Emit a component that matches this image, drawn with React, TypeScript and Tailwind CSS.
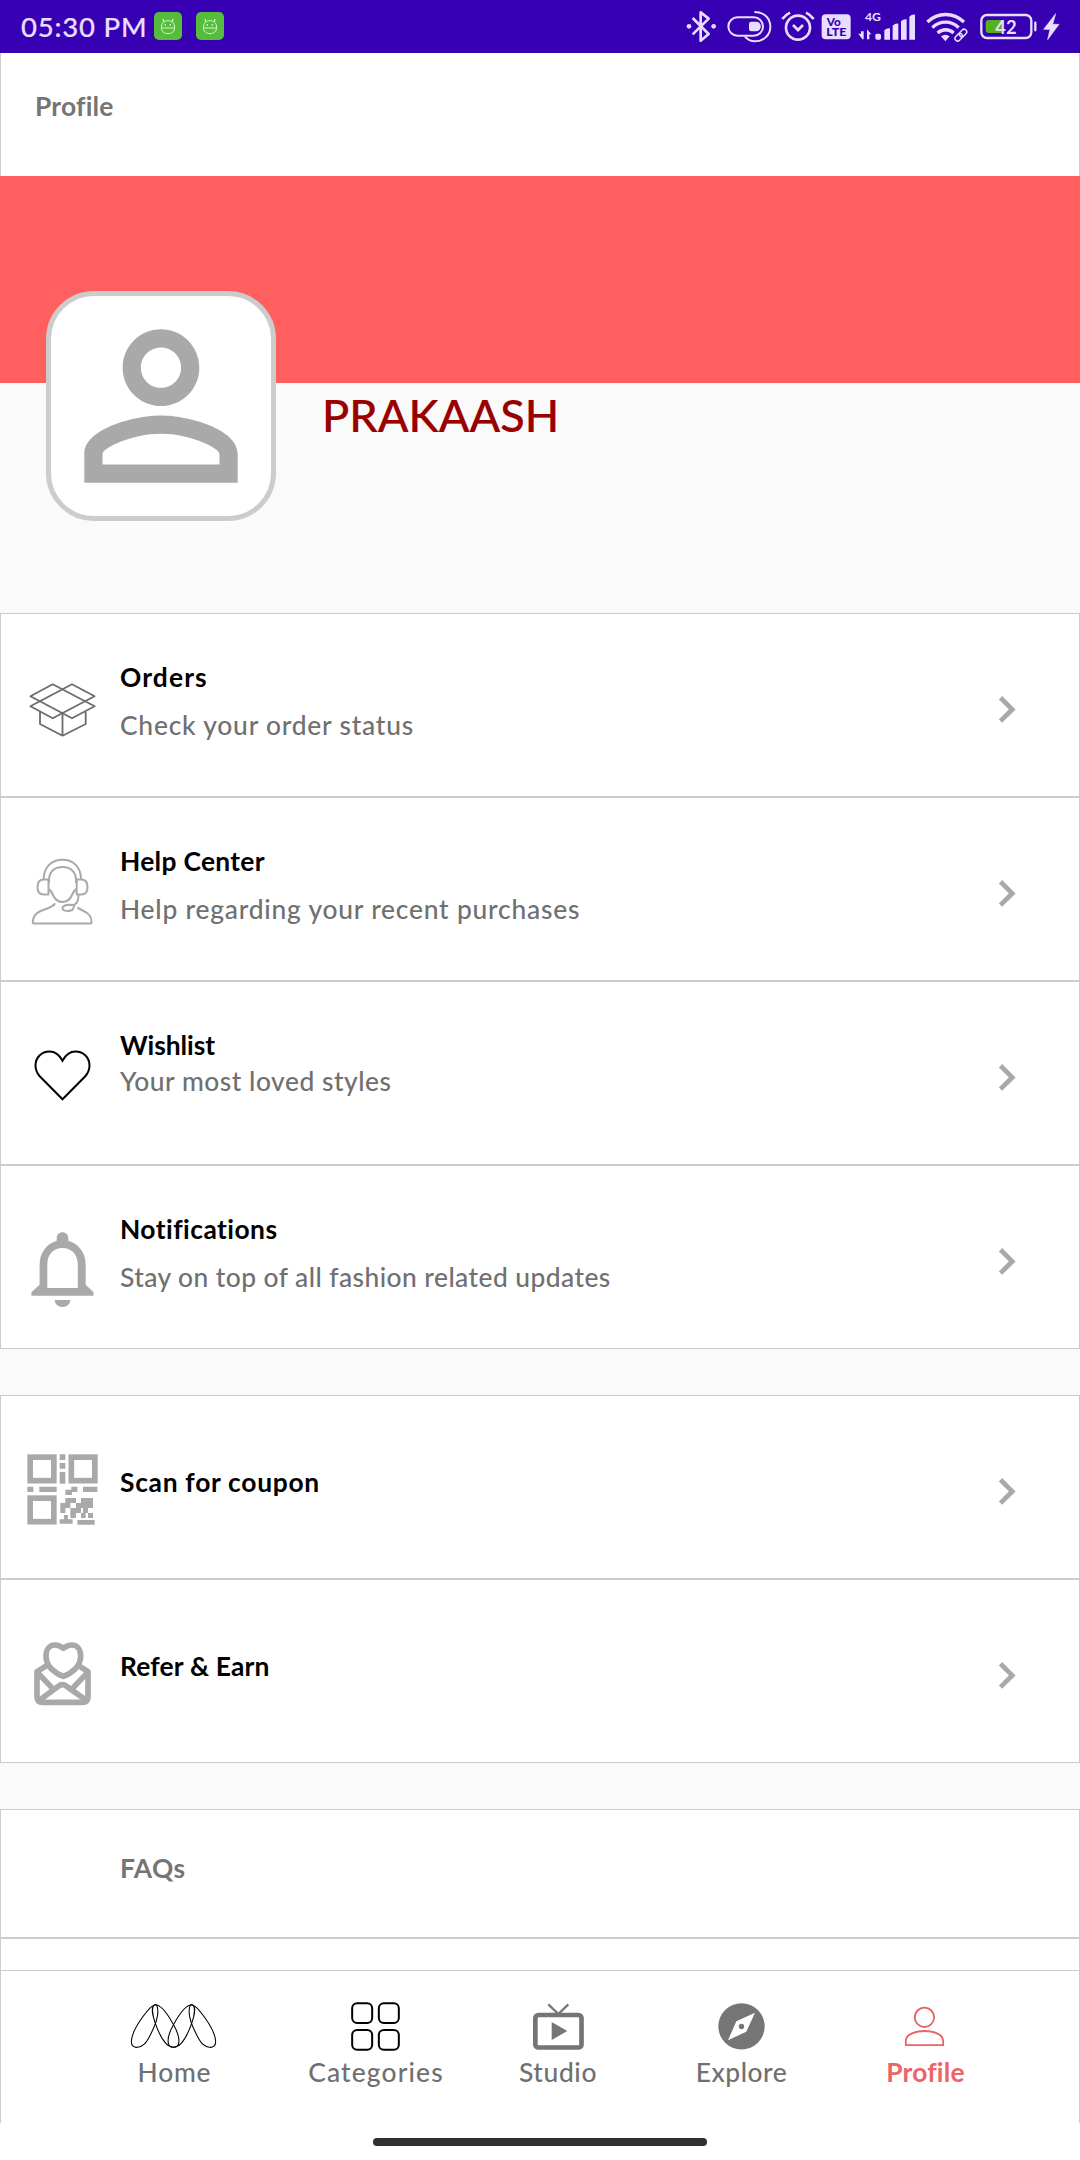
import React, { type ReactNode } from "react";

type IconProps = { x: number; y: number; w: number; h: number; children: ReactNode; className?: string };

function Icon({ x, y, w, h, children, className = "" }: IconProps) {
  return (
    <svg width={w} height={h} viewBox={`${x} ${y} ${w} ${h}`} fill="none" className={`shrink-0 ${className}`}>
      {children}
    </svg>
  );
}

/* ---------- status bar ---------- */

function NotificationBadge() {
  return (
    <svg width="28" height="28" viewBox="462 36 84 84" fill="none">
      <rect x="462" y="36" width="84" height="84" rx="15" fill="#55bd3b" />
      <g stroke="#d9f5cf" strokeWidth="3">
        <path d="M491 65l-2-8M517 65l2-8" strokeWidth="4" />
        <path d="M484 83c0-13 8-21 20-21s20 8 20 21c0 11-9 18-20 18s-20-7-20-18z" />
        <path d="M484 84h40" />
        <path d="M496 72v5M511 72v5" strokeWidth="4" />
      </g>
    </svg>
  );
}

function StatusIcon({ from, to, children }: { from: number; to: number; children: ReactNode }) {
  return (
    <svg
      width={(to - from) / 3}
      height="53"
      viewBox={`${from} 0 ${to - from} 159`}
      fill="none"
      stroke="#e9ddff"
      className="shrink-0"
    >
      {children}
    </svg>
  );
}

function StatusBar() {
  return (
    <header className="flex h-[53px] items-start justify-between bg-[#3700b3]">
      <div className="flex pl-[21px]">
        <span className="w-[133px] text-[27.5px] leading-[53px] font-medium tracking-[0.81px] whitespace-nowrap text-[#e9ddff] [-webkit-text-stroke:0.2px]">
          05:30 PM
        </span>
        <div className="flex gap-[14px] pt-3">
          <NotificationBadge />
          <NotificationBadge />
        </div>
      </div>
      <div className="flex">
        <StatusIcon from={0} to={155}>
          <path d="M68 54l48 48-24 20V37l24 19-48 47" strokeWidth="8" strokeLinejoin="round" />
          <circle cx="57" cy="79" r="7" fill="#e9ddff" stroke="none" />
          <circle cx="131" cy="79" r="7" fill="#e9ddff" stroke="none" />
        </StatusIcon>
        <StatusIcon from={155} to={315}>
          <rect x="174" y="52" width="104" height="55" rx="27.5" strokeWidth="6" />
          <path d="M243 65h14a14 14 0 0 1 0 29h-14q-7 0-7-7V72q0-7 7-7z" fill="#e9ddff" stroke="none" />
          <path d="M252 36c30 0 48 19 48 44s-20 44-46 44c-13 0-23-5-30-14" strokeWidth="6" />
        </StatusIcon>
        <StatusIcon from={315} to={445}>
          <circle cx="384" cy="83" r="36" strokeWidth="8" />
          <path d="M337 57q9-12 23-19M431 57q-9-12-23-19" strokeWidth="8" />
          <path d="M369 75l15 15 15-15" strokeWidth="8" />
        </StatusIcon>
        <StatusIcon from={445} to={555}>
          <rect x="456" y="43" width="87" height="75" rx="12" fill="#e9ddff" stroke="none" />
          <g fill="#3700b3" stroke="none" fontFamily="Lato" fontWeight="900">
            <text x="471" y="77" fontSize="34" textLength="42" lengthAdjust="spacingAndGlyphs">Vo</text>
            <text x="470" y="108" fontSize="34" textLength="60" lengthAdjust="spacingAndGlyphs">LTE</text>
          </g>
        </StatusIcon>
        <StatusIcon from={555} to={750}>
          <text x="585" y="63" fontSize="34" textLength="48" lengthAdjust="spacingAndGlyphs" fontFamily="Lato" fontWeight="700" fill="#e9ddff" stroke="none">
            4G
          </text>
          <g fill="#e9ddff" stroke="none">
            <path d="M577 118l-12-17h8V94h8v24zM591 118V88l13 15h-6v15z" />
            <rect x="616" y="101" width="17" height="18" rx="5" />
            <path d="M643 119V91q8-8 17-6v34zM668 119V77q8-8 17-6v48zM693 119V64q8-8 17-6v61zM718 119V50q8-8 17-6v75z" />
          </g>
        </StatusIcon>
        <StatusIcon from={750} to={910}>
          <g strokeWidth="10">
            <path d="M772 66c32-30 78-30 110 0" />
            <path d="M787 83c23-22 56-22 79 0" />
            <path d="M803 99c14-13 34-13 48 0" />
          </g>
          <path d="M813 109q13-9 26 0l-13 15z" fill="#e9ddff" stroke="none" />
          <g transform="rotate(-45 873 105)" strokeWidth="4.5">
            <rect x="851" y="97" width="25" height="16" rx="8" />
            <rect x="869" y="97" width="25" height="16" rx="8" />
          </g>
        </StatusIcon>
        <StatusIcon from={910} to={1110}>
          <rect x="935" y="45" width="150" height="69" rx="17" strokeWidth="7" />
          <path d="M957 60h42v39h-42q-9 0-9-9V69q0-9 9-9z" fill="#55b01f" stroke="none" />
          <path d="M1097 68v23" strokeWidth="7" strokeLinecap="round" />
          <text x="977" y="101" fontSize="54" textLength="64" lengthAdjust="spacingAndGlyphs" fontFamily="Lato" fontWeight="700" fill="#e9ddff" stroke="none">
            42
          </text>
        </StatusIcon>
        <StatusIcon from={1110} to={1230}>
          <path d="M1157 41l-36 47h19l-7 31 34-46h-19z" fill="#e9ddff" strokeWidth="2" />
        </StatusIcon>
      </div>
    </header>
  );
}

/* ---------- row icons ---------- */

const ROW_ICON = { x: 22, w: 80, h: 100 };

const OrdersIcon = () => (
  <Icon {...ROW_ICON} y={660}>
    <g stroke="#6c6c6c" strokeWidth="1.8" strokeLinejoin="round">
      <path d="M30.4 696.3L52.7 684.3 94.6 706.3 72 718.3 30.4 696.3z" />
      <path d="M94.6 696.3L72 684.3 30.4 706.3 52.7 718.3 94.6 696.3z" />
      <path d="M40 711.7V724l22.5 11.7L85.7 724v-12.3M62.5 713v22" />
    </g>
  </Icon>
);

const HelpIcon = () => (
  <Icon {...ROW_ICON} y={844}>
    <g stroke="#aaaaaa" strokeWidth="2" strokeLinecap="round" strokeLinejoin="round">
      <path d="M43.7 879c0-12 8-19.3 18.8-19.3S81 867 81 879" />
      <path d="M49 882v-2c0-8 5.500-13 13.500-13s13.500 5 13.500 13v2" />
      <path d="M49 889.500c2 1 2.500 2 4 5.500 2 4.500 5.500 7 9.500 7s7.500-2.500 9.500-7c1.500-3.500 2-4.500 4-5.500" />
      <path d="M48.500 879.500h-5c-4 0-6 3-6 7.500s2 7.500 6 7.500h5zM76.700 879.500h4.800c4 0 6 3 6 7.500s-2 7.500-6 7.500h-4.800z" />
      <path d="M78.500 895c0 5-1 8-4 9.700M74.500 905l-2 5c-3 1.200-9 1.400-10-.8-.5-2.500 2-4.200 6-4.500z" />
      <path d="M54.700 904c-3 3.500-8 4.500-13 6.500-6 2.500-9 6-9 12 0 .8.400 1.100 1 1.100h57c.6 0 .9-.3.900-1.100 0-7-3.500-9.500-8-11.500l-5.500-3" />
    </g>
  </Icon>
);

const HeartIcon = () => (
  <Icon {...ROW_ICON} y={1028}>
    <path
      d="M62.500 1060.700C60 1056 56 1051.500 49.500 1051.500c-8 0-14 6-14 14 0 4 1.500 7.500 4 10.500l23 23.300 23-23.300c2.500-3 4-6.500 4-10.500 0-8-6-14-14-14-6.500 0-10.500 4.500-13 9.200z"
      stroke="#000"
      strokeWidth="2"
    />
  </Icon>
);

const BellIcon = () => (
  <Icon {...ROW_ICON} y={1212}>
    <path
      fill="#a9a9a9"
      fillRule="evenodd"
      d="M56.700 1240.700v-2.500c0-3.400 2.500-6 5.800-6s5.800 2.600 5.800 6v2.500c10.500 3 17.400 12 17.400 24v20l7.800 7.500v3.500H31.400v-3.500l8.200-7.500v-20c0-12 6.900-21 17.100-24zM47.300 1288h30.500v-23.300c0-10-6-16.700-15.300-16.700s-15.200 6.700-15.200 16.700z"
    />
    <path fill="#a9a9a9" d="M54.700 1300h15.600c0 4-3.500 7-7.800 7s-7.800-3-7.800-7z" />
  </Icon>
);

const QrIcon = () => (
  <Icon {...ROW_ICON} y={1442}>
    <g transform="translate(0 1380) scale(0.33333)">
      <g stroke="#a9a9a9" strokeWidth="17">
        <rect x="90.500" y="231.500" width="71" height="70.500" />
        <rect x="214" y="231.500" width="70.500" height="70.500" />
        <rect x="90.500" y="354.500" width="71" height="70.500" />
      </g>
      <path
        fill="#a9a9a9"
        d="M179 223h17v17h-17zM179 249h17v17h-17zM179 276h17v35h-17zM82 320h18v16h-18zM118 320h52v16h-52zM249 320h43v16h-43zM214 320h18v16h-16v9h-20v-16h18zM196 354h32v15h-17v15h-15v15h-15v-30h15zM243 354h36v30h-15v15h-15v-15h-6v15h-15v15h-17v-30h17v-15h15zM243 399h14v15h-14zM264 399h15v15h-15zM192 405h12v13h14v13h-39v-13h13zM232 420h52v14h-52z"
      />
    </g>
  </Icon>
);

const ReferIcon = () => (
  <Icon {...ROW_ICON} y={1626}>
    <g transform="translate(0 1380) scale(0.33333)" stroke="#a9a9a9" strokeWidth="17" strokeLinejoin="round">
      <path d="M190 805c-12-10-20-10-26-10-16 0-26 14-26 33 0 32 27 52 52 61 25-9 52-29 52-61 0-19-10-33-26-33-6 0-14 0-26 10z" />
      <path d="M140 857l-29 18v75q0 17 17 17h119q17 0 17-17v-75l-28-18" />
      <path d="M113 878l45 48M262 878l-45 48M115 963l60-44q12-10 25 0l62 44" />
    </g>
  </Icon>
);

/* ---------- list rows ---------- */

type RowProps = {
  icon: ReactNode;
  title: string;
  titleTracking: string;
  sub?: string;
  subTracking?: string;
  tight?: boolean;
};

function Row({ icon, title, titleTracking, sub, subTracking = "", tight }: RowProps) {
  return (
    <div className="flex h-[184px] items-start border border-[#cccccc] bg-white pl-[21px]">
      <div className="mt-[46px] w-[98px]">{icon}</div>
      <div className={`flex-1 whitespace-nowrap text-[26.4px] ${sub ? "pt-[39px]" : "pt-[62px]"}`}>
        <div className={`leading-[48px] font-bold text-black ${titleTracking}`}>{title}</div>
        {sub && (
          <div
            className={`font-medium text-[#707070] ${tight ? "leading-[25px]" : "leading-[49px]"} ${subTracking}`}
          >
            {sub}
          </div>
        )}
      </div>
      <svg width="20" height="30" viewBox="997 694 20 30" fill="none" className="mt-[80px] mr-[62px]">
        <path d="M1000.500 697.700l11.700 11.700-11.700 11.700" stroke="#a9a9a9" strokeWidth="4.800" />
      </svg>
    </div>
  );
}

/* ---------- bottom navigation ---------- */

function NavItem({ icon, label, width, text }: { icon: ReactNode; label: string; width: string; text: string }) {
  return (
    <div className={`flex flex-col items-center pt-[25px] ${width}`}>
      {icon}
      <span className={`pl-px text-[26.4px] leading-[41px] whitespace-nowrap ${text}`}>{label}</span>
    </div>
  );
}

const Petals = () => (
  <>
    <path d="M167 134C150 134 94 210 94 245c0 25 33 23 51-9 20-36 31-70 28-89-1-9-3-13-6-13z" />
    <path d="M165 134c-11 4-9 28 1 56 14 40 34 72 55 72 19 0 23-26 0-67-18-34-40-61-56-61z" />
  </>
);

function BottomNav() {
  return (
    <nav className="flex h-[153px] border border-b-0 border-[#cccccc] bg-white pl-[83px]">
      <NavItem
        label="Home"
        width="w-[180px]"
        text="font-medium tracking-[0.8px] text-[#707070]"
        icon={
          <Icon x={129} y={1996} w={90} h={56}>
            <g transform="translate(100 1960) scale(0.33333)" stroke="#000" strokeWidth="3.200">
              <Petals />
              <g transform="translate(441 0) scale(-1 1)">
                <Petals />
              </g>
            </g>
          </Icon>
        }
      />
      <NavItem
        label="Categories"
        width="w-[223px]"
        text="font-medium tracking-[1.15px] text-[#707070]"
        icon={
          <Icon x={331} y={1996} w={90} h={56}>
            <g transform="translate(100 1960) scale(0.33333)" stroke="#000" strokeWidth="6">
              <rect x="756.500" y="130" width="60" height="59" rx="15" />
              <rect x="836.500" y="130" width="60" height="59" rx="15" />
              <rect x="756.500" y="210" width="60" height="59" rx="15" />
              <rect x="836.500" y="210" width="60" height="59" rx="15" />
            </g>
          </Icon>
        }
      />
      <NavItem
        label="Studio"
        width="w-[141px]"
        text="font-medium tracking-[0.64px] text-[#707070]"
        icon={
          <Icon x={513} y={1996} w={90} h={56}>
            <g transform="translate(100 1960) scale(0.33333)">
              <rect x="1306" y="165" width="138.500" height="97.500" rx="9" stroke="#757575" strokeWidth="14" />
              <path d="M1345 133l30 29 30-29" stroke="#757575" strokeWidth="7" />
              <path d="M1355 186l47 27-47 27z" fill="#757575" />
            </g>
          </Icon>
        }
      />
      <NavItem
        label="Explore"
        width="w-[226px]"
        text="font-medium tracking-[0.53px] text-[#707070]"
        icon={
          <Icon x={696} y={1996} w={90} h={56}>
            <g transform="translate(560 1960) scale(0.33333)">
              <circle cx="544.500" cy="199" r="69.500" fill="#757575" />
              <path d="M585 158l-26 57-55 26 25-57z" fill="#fff" />
              <circle cx="544.500" cy="199.500" r="8" fill="#757575" />
            </g>
          </Icon>
        }
      />
      <NavItem
        label="Profile"
        width="w-[142px]"
        text="font-bold tracking-[0.2px] text-[#ee6466]"
        icon={
          <Icon x={880} y={1996} w={90} h={56}>
            <g transform="translate(560 1960) scale(0.33333)" stroke="#ec6264" strokeWidth="5.500">
              <circle cx="1093.500" cy="172" r="29" />
              <path d="M1037.500 255.500V242c0-18 27-29 56-29s56 11 56 29v13.500z" />
            </g>
          </Icon>
        }
      />
    </nav>
  );
}

/* ---------- page ---------- */

export default function App() {
  return (
    <div className="flex h-[2160px] w-[1080px] flex-col overflow-hidden bg-[#fafafa] font-['Lato','Open_Sans',sans-serif]">
      <StatusBar />
      <div className="h-[123px] border-x border-[#cccccc] bg-white pt-[30px] pl-[34px]">
        <h1 className="text-[26.4px] leading-[47px] font-bold tracking-[0.2px] text-[#757575]">Profile</h1>
      </div>

      <section className="relative h-[437px]">
        <div className="h-[207px] bg-[#ff5f5f]" />
        <div className="absolute top-[115px] left-[46px] h-[230px] w-[230px] rounded-[48px] border-5 border-[#cccccc] bg-white">
          <svg viewBox="0 0 24 24" fill="#a9a9a9" className="-m-[5px] h-[230px] w-[230px]">
            <path d="M12 5.900c1.160 0 2.100.940 2.100 2.100s-.940 2.100-2.100 2.100S9.900 9.160 9.900 8s.940-2.100 2.100-2.100m0 9c2.970 0 6.100 1.460 6.100 2.100v1.100H5.900V17c0-.640 3.130-2.100 6.100-2.100M12 4C9.790 4 8 5.790 8 8s1.790 4 4 4 4-1.790 4-4-1.790-4-4-4zm0 9c-2.670 0-8 1.340-8 4v3h16v-3c0-2.660-5.330-4-8-4z" />
          </svg>
        </div>
        <div className="pt-[5px] pl-[322px] text-[45.1px] leading-[53px] font-medium tracking-[0.02px] text-[#990000] [-webkit-text-stroke:0.2px]">
          PRAKAASH
        </div>
      </section>

      <section>
        <Row icon={<OrdersIcon />} title="Orders" titleTracking="tracking-[1.12px]" sub="Check your order status" subTracking="tracking-[0.78px]" />
        <Row icon={<HelpIcon />} title="Help Center" titleTracking="tracking-[0.3px]" sub="Help regarding your recent purchases" subTracking="tracking-[0.78px]" />
        <Row icon={<HeartIcon />} title="Wishlist" titleTracking="tracking-[-0.05px]" sub="Your most loved styles" subTracking="tracking-[0.53px]" tight />
        <Row icon={<BellIcon />} title="Notifications" titleTracking="tracking-[0.45px]" sub="Stay on top of all fashion related updates" subTracking="tracking-[0.44px]" />
      </section>

      <section className="mt-[46px]">
        <Row icon={<QrIcon />} title="Scan for coupon" titleTracking="tracking-[0.7px]" />
        <Row icon={<ReferIcon />} title="Refer & Earn" titleTracking="tracking-[0.17px]" />
      </section>

      <section className="mt-[46px]">
        <div className="h-[129px] border border-[#cccccc] bg-white pt-[34px] pl-[119px]">
          <div className="text-[26.4px] leading-[48px] font-bold tracking-[0.43px] text-[#757575]">FAQs</div>
        </div>
        <div className="h-[32px] border border-b-0 border-[#cccccc] bg-white" />
      </section>

      <BottomNav />
      <footer className="flex h-[37px] justify-center bg-white pt-[15px]">
        <div className="h-2 w-[334px] rounded-full bg-[#303030]" />
      </footer>
    </div>
  );
}
